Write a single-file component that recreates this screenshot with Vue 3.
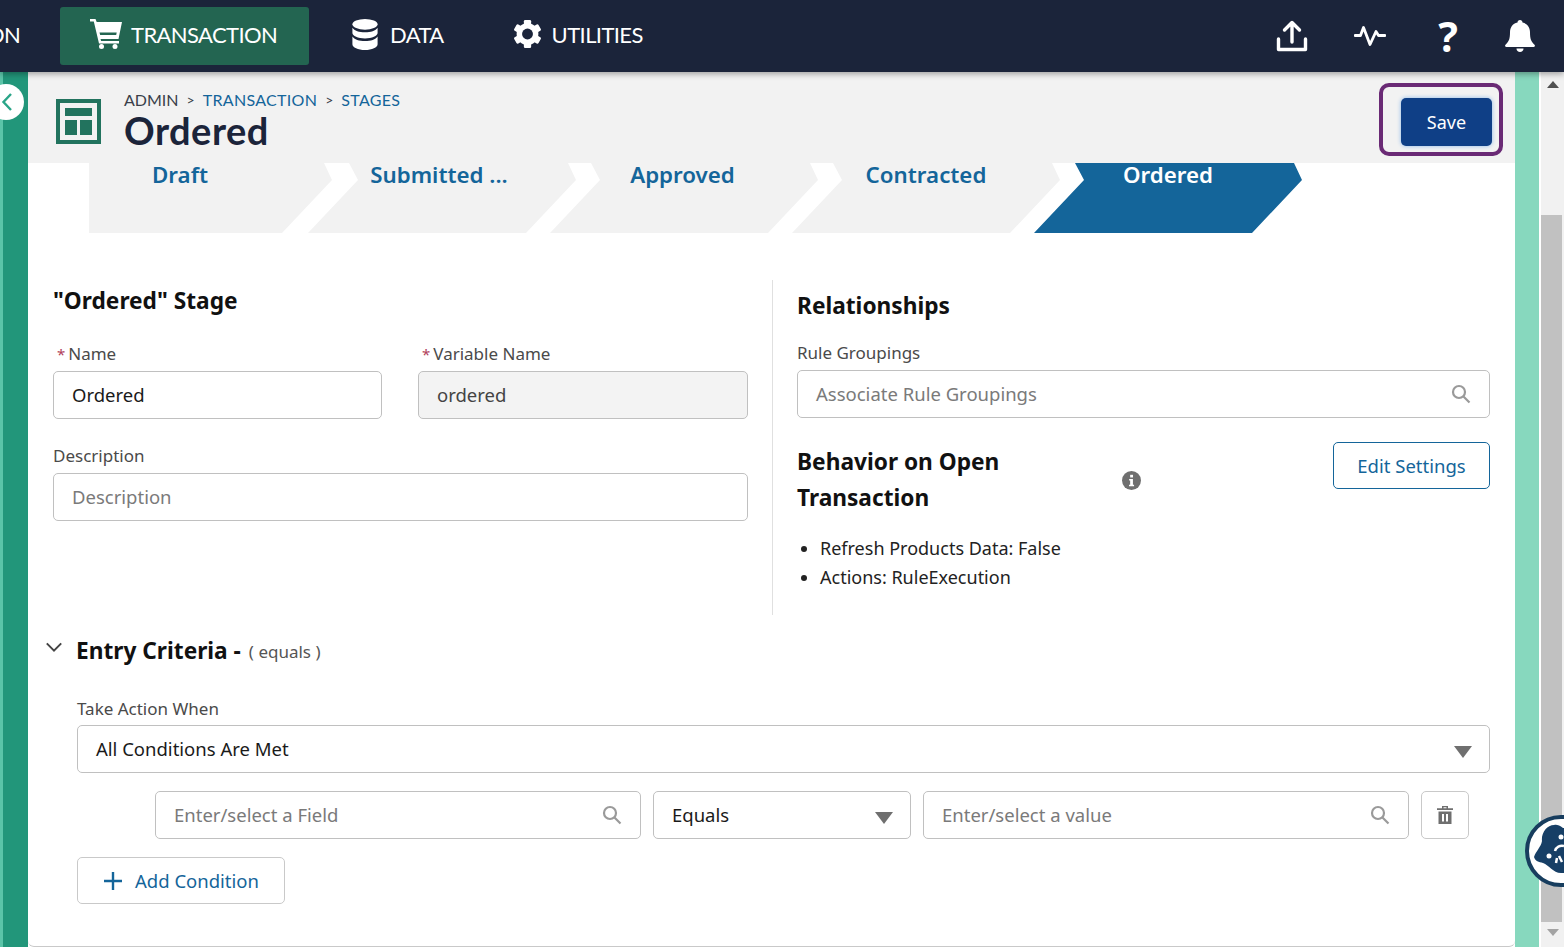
<script setup>
const steps = [
  { label: "Draft", first: true },
  { label: "Submitted ..." },
  { label: "Approved" },
  { label: "Contracted" },
  { label: "Ordered", active: true },
];
</script>

<template>
  <div class="page">
    <header class="topbar">
      <nav class="nav">
        <span class="nav__cut">ON</span>
        <a class="nav__item nav__item--active">
          <svg class="nav__cart" viewBox="0 0 32 30" fill="#fff">
            <path fill-rule="evenodd" d="M0 0h5.500l1.200 3H32l-3.500 17H10.500l.6 2H29v2.500H9L3.800 2.500H0zM9.500 13.500l.7 2.500h16l.5-2.500z" />
            <circle cx="11.500" cy="27.500" r="2.500" />
            <circle cx="25" cy="27.500" r="2.500" />
          </svg>
          TRANSACTION
        </a>
        <a class="nav__item nav__item--data">
          <svg class="nav__db" viewBox="0 0 26 32" fill="#fff">
            <ellipse cx="13" cy="5.500" rx="13" ry="5.500" />
            <path d="M0 9c2 3.300 7 4.800 13 4.800S24 12.300 26 9v5.500c0 3-5.800 5.500-13 5.500S0 17.500 0 14.500z" />
            <path d="M0 18c2 3.300 7 4.800 13 4.800S24 21.300 26 18v8c0 3.300-5.800 6-13 6S0 29.300 0 26z" />
          </svg>
          DATA
        </a>
        <a class="nav__item nav__item--util">
          <svg class="nav__gear" viewBox="0 0 32 32" fill="#fff">
            <circle cx="16" cy="16" r="12" />
            <rect x="12" y="0.500" width="8" height="31" rx="1.500" />
            <rect x="12" y="0.500" width="8" height="31" rx="1.500" transform="rotate(60 16 16)" />
            <rect x="12" y="0.500" width="8" height="31" rx="1.500" transform="rotate(120 16 16)" />
            <circle cx="16" cy="16" r="6" fill="#1b243a" />
          </svg>
          UTILITIES
        </a>
      </nav>
      <div class="tools">
        <svg class="tool tool--upload" viewBox="0 0 32 32" fill="none" stroke="#fff" stroke-width="3.400" stroke-linecap="round" stroke-linejoin="round">
          <path d="M2.500 19v10.500h27V19" />
          <path d="M16 22V3M8.500 10 16 2.500 23.500 10" />
        </svg>
        <svg class="tool tool--pulse" viewBox="0 0 32 20" fill="none" stroke="#fff" stroke-width="2.800" stroke-linecap="round" stroke-linejoin="round">
          <path d="M1 9.500h5.500l3-8 6.500 17 6-13 2.500 4H31" />
        </svg>
        <span class="tool tool--help">?</span>
        <svg class="tool tool--bell" viewBox="0 0 32 32" fill="#fff">
          <path d="M16 0c1.500 0 2.500 1 2.500 2.500C23.500 3.500 26 7.500 26 12.500c0 6 1 9 4.500 12.300.800.800.500 2.200-.800 2.200H2.300c-1.300 0-1.600-1.400-.800-2.200C5 21.500 6 18.500 6 12.500c0-5 2.500-9 7.500-10C13.500 1 14.500 0 16 0z" />
          <path d="M12.500 28.500h7c0 2-1.500 3.500-3.500 3.500s-3.500-1.500-3.500-3.500z" />
        </svg>
      </div>
    </header>

    <div class="body">
      <div class="rail"></div>
      <button class="toggle" type="button">
        <svg viewBox="0 0 12 20" width="12" height="20" fill="none" stroke="#2aa588" stroke-width="2.400">
          <path d="M10 2 2.500 10l7.500 8" />
        </svg>
      </button>

      <main class="card">
        <div class="head">
          <svg class="head__icon" viewBox="0 0 46 46">
            <rect x="2" y="2" width="41" height="41" fill="none" stroke="#22735e" stroke-width="4" />
            <rect x="9" y="9" width="27" height="8" fill="#22735e" />
            <rect x="9" y="21" width="12" height="15" fill="#22735e" />
            <rect x="24" y="21" width="12" height="15" fill="#22735e" />
          </svg>
          <div class="head__text">
            <div class="crumbs">
              <span>ADMIN</span><span class="crumbs__sep">&gt;</span><a>TRANSACTION</a><span class="crumbs__sep">&gt;</span><a>STAGES</a>
            </div>
            <h1 class="head__title">Ordered</h1>
          </div>
          <div class="save-ring">
            <button class="save" type="button">Save</button>
          </div>
        </div>

        <div class="steps">
          <div
            v-for="step in steps"
            :key="step.label"
            class="step"
            :class="{ 'step--first': step.first, 'step--active': step.active }"
          >
            {{ step.label }}
          </div>
        </div>

        <div class="columns">
          <section class="left">
            <h2 class="h-stage">"Ordered" Stage</h2>
            <div class="pair">
              <div class="field">
                <label class="label"><i>*</i>Name</label>
                <div class="input">Ordered</div>
              </div>
              <div class="field">
                <label class="label"><i>*</i>Variable Name</label>
                <div class="input input--off">ordered</div>
              </div>
            </div>
            <div class="field field--desc">
              <label class="label">Description</label>
              <div class="input input--ph">Description</div>
            </div>
          </section>

          <section class="right">
            <h2 class="h-rel">Relationships</h2>
            <div class="field field--rule">
              <label class="label">Rule Groupings</label>
              <div class="input input--ph input--search">
                Associate Rule Groupings
                <svg class="search" viewBox="0 0 20 20" fill="none" stroke="#9a9a9a" stroke-width="2.200"><circle cx="8" cy="8" r="6" /><path d="m12.500 12.500 6 6" /></svg>
              </div>
            </div>
            <div class="behavior">
              <h2 class="behavior__title">Behavior on Open Transaction</h2>
              <svg class="info" viewBox="0 0 20 20">
                <circle cx="10" cy="10" r="10" fill="#6f6f6f" />
                <rect x="8.600" y="4" width="3" height="2.800" fill="#fff" />
                <path d="M7.500 8.500h4v6h1.200v1.600H7.400v-1.600h1.200v-4.400H7.500z" fill="#fff" />
              </svg>
              <button class="btn-edit" type="button">Edit Settings</button>
            </div>
            <ul class="facts">
              <li>Refresh Products Data: False</li>
              <li>Actions: RuleExecution</li>
            </ul>
          </section>
        </div>

        <section class="entry">
          <div class="entry__head">
            <svg class="entry__chev" viewBox="0 0 20 12" fill="none" stroke="#444" stroke-width="2.200"><path d="m2 2 8 8 8-8" /></svg>
            <h2 class="entry__title">Entry Criteria -</h2>
            <span class="entry__sub">( equals )</span>
          </div>
          <div class="entry__body">
            <label class="label">Take Action When</label>
            <div class="input input--select">
              All Conditions Are Met
              <span class="caret"></span>
            </div>
            <div class="cond">
              <div class="input input--ph input--search cond__field">
                Enter/select a Field
                <svg class="search" viewBox="0 0 20 20" fill="none" stroke="#9a9a9a" stroke-width="2.200"><circle cx="8" cy="8" r="6" /><path d="m12.500 12.500 6 6" /></svg>
              </div>
              <div class="input input--select cond__op">
                Equals
                <span class="caret"></span>
              </div>
              <div class="input input--ph input--search cond__field">
                Enter/select a value
                <svg class="search" viewBox="0 0 20 20" fill="none" stroke="#9a9a9a" stroke-width="2.200"><circle cx="8" cy="8" r="6" /><path d="m12.500 12.500 6 6" /></svg>
              </div>
              <button class="btn-del" type="button">
                <svg viewBox="0 0 16 18" width="16" height="18" fill="#6f6f6f">
                  <path fill-rule="evenodd" d="M5 2.200V0h6v2.200h5V4H0V2.200zM6.500 2.200h3V1.200h-3z" />
                  <path d="M1.500 5.500h13V18h-13zM5 8v7.500h2V8zm4 0v7.500h2V8z" fill-rule="evenodd" />
                </svg>
              </button>
            </div>
            <button class="btn-add" type="button">
              <svg viewBox="0 0 20 20" width="20" height="20" fill="none" stroke="#14659a" stroke-width="2.400"><path d="M10 1v18M1 10h18" /></svg>
              Add Condition
            </button>
          </div>
        </section>
      </main>

      <div class="mint"></div>
      <div class="scroll">
        <span class="scroll__up"></span>
        <div class="scroll__thumb"></div>
        <span class="scroll__down"></span>
      </div>

      <svg class="bear" viewBox="0 0 76 76">
        <circle cx="38" cy="38" r="34" fill="#fff" stroke="#173d5e" stroke-width="4" />
        <path d="M11 44c2-6 7-10 8-16-1-8 5-16 12-16 5-1 7 2 9 3h20v45H38c-8 0-12-8-18-10-4-1-8-2-9-6z" fill="#173f66" />
        <circle cx="26" cy="43" r="2.500" fill="#fff" />
        <circle cx="38" cy="24" r="2.500" fill="#fff" />
        <path d="M32 38c1-4 5-6 9-5M36 43l3 6M34 45l-1 5" fill="none" stroke="#fff" stroke-width="2.500" />
      </svg>
    </div>
  </div>
</template>

<style scoped>
.page {
  display: flex;
  flex-direction: column;
  height: 947px;
  overflow: hidden;
  font-family: "Noto Sans", "Open Sans", sans-serif;
  color: #1a1a1a;
}

/* top bar */
.topbar {
  flex: 0 0 72px;
  display: flex;
  justify-content: space-between;
  align-items: center;
  background: #1b243a;
  position: relative;
  z-index: 2;
  box-shadow: 0 2px 6px rgba(0, 0, 0, 0.35);
}
.nav {
  display: flex;
  align-items: center;
  height: 58px;
  font-family: Lato, sans-serif;
  font-size: 22px;
  letter-spacing: -0.6px;
  color: #fff;
}
.nav__cut {
  margin-left: -13px;
  width: 73px;
  margin-top: -3px;
}
.nav__item {
  display: flex;
  align-items: center;
  height: 58px;
  box-sizing: border-box;
  padding-bottom: 4px;
}
.nav__item--active {
  width: 249px;
  padding-left: 30px;
  background: #236551;
  border-radius: 3px;
  gap: 9px;
}
.nav__cart {
  width: 32px;
  height: 30px;
}
.nav__item--data {
  margin-left: 43px;
  gap: 12px;
}
.nav__db {
  width: 26px;
  height: 31px;
}
.nav__item--util {
  margin-left: 69px;
  gap: 10px;
}
.nav__gear {
  width: 29px;
  height: 30px;
}
.tools {
  display: flex;
  align-items: center;
  padding-right: 28px;
}
.tool {
  display: block;
}
.tool--upload {
  width: 32px;
  height: 32px;
}
.tool--pulse {
  width: 32px;
  height: 20px;
  margin-left: 46px;
}
.tool--help {
  margin-left: 49px;
  width: 26px;
  text-align: center;
  color: #fff;
  font-weight: 700;
  font-size: 41px;
  line-height: 40px;
}
.tool--bell {
  width: 32px;
  height: 32px;
  margin-left: 43px;
}

/* body */
.body {
  flex: 1;
  display: flex;
  position: relative;
  min-height: 0;
}
.rail {
  flex: 0 0 28px;
  background: linear-gradient(to right, #5bc4a8 0 3px, #22967a 3px);
}
.toggle {
  position: absolute;
  left: -12px;
  top: 12px;
  width: 36px;
  height: 36px;
  border: 0;
  border-radius: 50%;
  background: #fff;
  display: flex;
  align-items: center;
  justify-content: center;
  padding: 0 0 0 2px;
  z-index: 1;
}
.card {
  flex: 0 0 1487px;
  box-sizing: border-box;
  height: 875px;
  background: #fff;
  border-bottom: 1px solid #c9c9c9;
  border-radius: 0 0 6px 6px;
  overflow: hidden;
}
.head {
  display: flex;
  align-items: flex-start;
  height: 91px;
  background: #f2f2f2;
  box-sizing: border-box;
  padding: 26px 12px 0 28px;
}
.head__icon {
  width: 46px;
  height: 46px;
  flex: none;
  margin-top: 1px;
}
.head__text {
  margin-left: 22px;
  margin-top: -8px;
  flex: 1;
}
.crumbs {
  display: flex;
  font-family: Lato, sans-serif;
  font-size: 16px;
  line-height: 20px;
  color: #3a3f4a;
}
.crumbs a {
  color: #14659a;
  letter-spacing: 0.3px;
}
.crumbs__sep {
  margin: 0 8px;
  font-size: 14px;
}
.head__title {
  margin: 0;
  font-family: Lato, sans-serif;
  font-weight: 700;
  font-size: 38px;
  letter-spacing: 0.5px;
  line-height: 40px;
  color: #1b243a;
}
.save-ring {
  margin-top: -15px;
  width: 124px;
  height: 73px;
  box-sizing: border-box;
  border: 4px solid #6a2a75;
  border-radius: 10px;
  padding: 11px 0 0 18px;
}
.save {
  display: block;
  width: 91px;
  height: 48px;
  border: 0;
  border-radius: 5px;
  background: #0f3f86;
  box-shadow: 0 0 4px #8bb8ea;
  color: #fff;
  font: 18px "Noto Sans", sans-serif;
}

/* stages */
.steps {
  display: flex;
  height: 70px;
  margin-left: 61px;
}
.step {
  width: 268px;
  height: 70px;
  margin-left: -26px;
  box-sizing: border-box;
  background: #f2f2f2;
  clip-path: polygon(41px 0, 260px 0, 268px 17px, 218px 70px, 0 70px, 50px 17px);
  color: #14659a;
  font-size: 22.300px;
  font-weight: 600;
  line-height: 24px;
  text-align: center;
  white-space: nowrap;
}
.step--first {
  width: 243px;
  margin-left: 0;
  margin-right: 2px;
  padding-right: 61px;
  clip-path: polygon(0 0, 235px 0, 243px 17px, 193px 70px, 0 70px);
}
.step:nth-child(2) {
  padding-right: 6px;
}
.step:nth-child(3) {
  padding-right: 3px;
}
.step--active {
  background: #14659a;
  color: #fff;
}

/* stage + relationships */
.columns {
  display: flex;
  margin-top: 47px;
  height: 335px;
}
.left {
  width: 745px;
  box-sizing: border-box;
  padding: 0 24px 0 25px;
  border-right: 1px solid #e0e0e0;
}
.right {
  flex: 1;
  padding: 0 25px 0 24px;
}
.h-stage,
.h-rel,
.behavior__title,
.entry__title {
  margin: 0;
  font-weight: 700;
  font-size: 22.700px;
  color: #111;
}
.h-stage {
  line-height: 42px;
}
.h-rel {
  line-height: 52px;
}
.pair {
  display: grid;
  grid-template-columns: 329px 330px;
  justify-content: space-between;
  margin-top: 19px;
}
.label {
  display: block;
  font-size: 17px;
  line-height: 26px;
  margin-bottom: 4px;
  color: #4a4a4a;
}
.label i {
  font-style: normal;
  font-size: 15px;
  color: #b0405a;
  margin: 0 3px 0 4px;
}
.field--desc {
  margin-top: 24px;
}
.field--rule {
  margin-top: 8px;
}
.input {
  box-sizing: border-box;
  height: 48px;
  display: flex;
  align-items: center;
  padding: 0 18px 2px;
  border: 1px solid #c0c0c0;
  border-radius: 5px;
  background: #fff;
  font-size: 18.500px;
  color: #1a1a1a;
  position: relative;
}
.input--off {
  background: #f3f3f3;
  color: #444;
}
.input--ph {
  color: #7a7a7a;
}
.search {
  position: absolute;
  right: 18px;
  top: 13px;
  width: 20px;
  height: 20px;
}
.behavior {
  display: flex;
  align-items: flex-start;
  margin-top: 24px;
}
.behavior__title {
  width: 260px;
  line-height: 36px;
  margin-top: 2px;
}
.info {
  width: 19px;
  height: 19px;
  margin: 29px 0 0 65px;
}
.btn-edit {
  margin-left: auto;
  width: 157px;
  height: 47px;
  border: 1px solid #14659a;
  border-radius: 5px;
  background: #fff;
  color: #14659a;
  font: 18.500px "Noto Sans", sans-serif;
}
.facts {
  margin: 18px 0 0;
  padding-left: 23px;
  font-size: 18px;
  line-height: 29px;
  color: #222;
}

/* entry criteria */
.entry {
  margin-top: 15px;
}
.entry__head {
  display: flex;
  align-items: center;
  height: 40px;
  padding-left: 17px;
}
.entry__chev {
  width: 18px;
  height: 12px;
  margin-top: -6px;
}
.entry__title {
  margin-left: 13px;
}
.entry__sub {
  margin-left: 8px;
  font-size: 17px;
  color: #555;
  margin-top: 3px;
}
.entry__body {
  padding: 26px 25px 0 49px;
}
.entry__body .label {
  margin-bottom: 3px;
}
.input--select {
  padding-right: 40px;
}
.caret {
  position: absolute;
  right: 17px;
  top: 20px;
  width: 0;
  height: 0;
  border-left: 9.500px solid transparent;
  border-right: 9.500px solid transparent;
  border-top: 12px solid #6f6f6f;
}
.cond {
  display: flex;
  gap: 12px;
  margin: 18px 21px 0 78px;
}
.cond__field {
  flex: 0 0 486px;
}
.cond__op {
  flex: 0 0 258px;
}
.btn-del {
  flex: 0 0 48px;
  height: 48px;
  border: 1px solid #c9c9c9;
  border-radius: 5px;
  background: #fff;
  padding: 0;
  display: flex;
  align-items: center;
  justify-content: center;
}
.btn-add {
  display: flex;
  align-items: center;
  gap: 12px;
  margin-top: 18px;
  width: 208px;
  height: 47px;
  padding: 0 0 0 25px;
  border: 1px solid #c9c9c9;
  border-radius: 5px;
  background: #fff;
  color: #14659a;
  font: 18.500px "Noto Sans", sans-serif;
}

/* right edge */
.mint {
  flex: 0 0 24px;
  background: #87d8be;
}
.scroll {
  flex: 0 0 23px;
  margin-left: 2px;
  background: #f1f1f1;
  display: flex;
  flex-direction: column;
  align-items: center;
  position: relative;
}
.scroll__up {
  width: 0;
  height: 0;
  margin-top: 9px;
  border-left: 6px solid transparent;
  border-right: 6px solid transparent;
  border-bottom: 7px solid #505050;
}
.scroll__thumb {
  width: 21px;
  height: 707px;
  margin: 127px 2px 0 0;
  background: #c1c1c1;
}
.scroll__down {
  width: 0;
  height: 0;
  margin-top: 7px;
  border-left: 6px solid transparent;
  border-right: 6px solid transparent;
  border-top: 7px solid #a3a3a3;
}
.bear {
  position: absolute;
  left: 1523px;
  top: 741px;
  width: 76px;
  height: 76px;
}
</style>

<style>
html,
body {
  margin: 0;
  overflow: hidden;
}
</style>
